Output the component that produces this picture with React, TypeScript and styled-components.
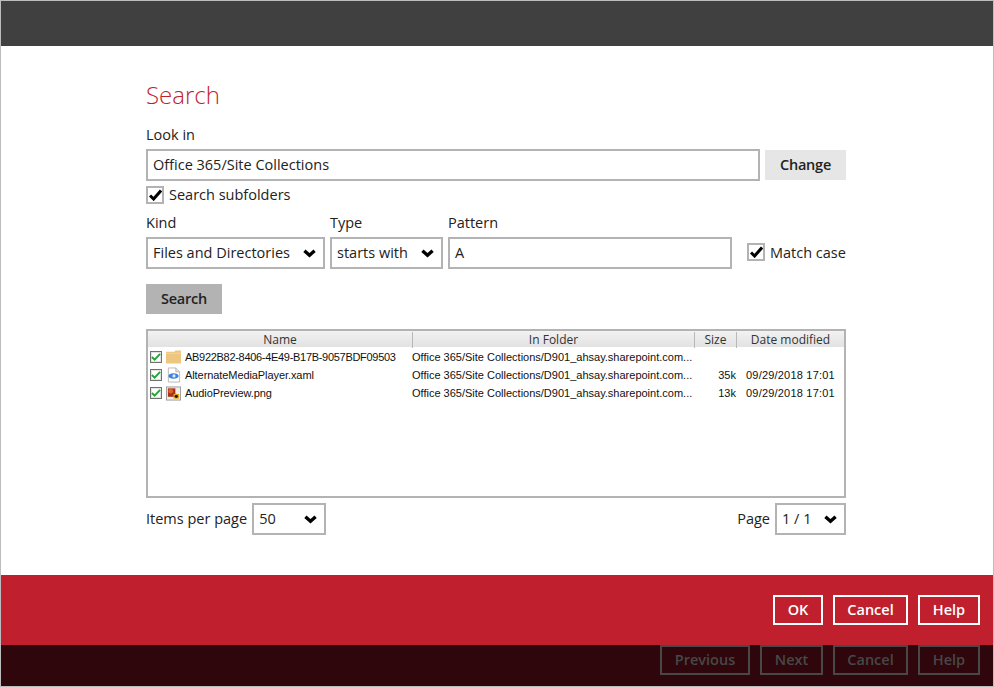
import React from 'react';
import styled, { createGlobalStyle } from 'styled-components';

const GlobalStyle = createGlobalStyle`
  html, body {
    margin: 0;
    padding: 0;
    background: #fff;
  }
  * {
    box-sizing: border-box;
  }
`;

const Frame = styled('div')`
  width: 994px;
  height: 687px;
  display: flex;
  flex-direction: column;
  border: 1px solid #bdbdbd;
  font-family: 'Open Sans', sans-serif;
  font-size: 14.5px;
  color: #222;
  background: #fff;
`;

const TopBar = styled('div')`
  height: 45px;
  flex: none;
  background: #404040;
`;

const Main = styled('div')`
  flex: 1;
  padding: 0 147px 0 145px;
  display: flex;
  flex-direction: column;
`;

const Title = styled('h1')`
  margin: 32px 0 0;
  height: 33px;
  font-size: 24px;
  line-height: 33px;
  font-weight: 300;
  color: #c01f2e;
`;

const Label = styled('div')`
  height: 20px;
  line-height: 20px;
  white-space: nowrap;
`;

const LookInLabel = styled(Label)`
  margin-top: 14px;
`;

const Row = styled('div')`
  display: flex;
  align-items: center;
`;

const LookInRow = styled(Row)`
  margin-top: 4px;
  gap: 5px;
`;

const Box = styled('div')<{ $width?: number; $grow?: boolean }>`
  height: 32px;
  width: ${({ $width }) => ($width ? `${$width}px` : 'auto')};
  flex: ${({ $grow }) => ($grow ? '1' : 'none')};
  border: 2px solid #b3b3b3;
  background: #fff;
  padding: 0 5px 1px;
  display: flex;
  align-items: center;
  justify-content: space-between;
  white-space: nowrap;

  svg {
    margin: 2px 2px 0 0;
  }
`;

const GreyButton = styled('button')<{ $width: number; $dark?: boolean }>`
  width: ${({ $width }) => $width}px;
  height: 30px;
  flex: none;
  padding: 0 0 1px;
  border: 0;
  font: 600 14.5px 'Open Sans', sans-serif;
  letter-spacing: -0.2px;
  color: #222;
  background: ${({ $dark }) => ($dark ? '#b3b3b3' : '#e6e6e6')};
`;

const CheckRow = styled(Row)`
  gap: 5px;
  white-space: nowrap;
`;

const SubfolderRow = styled(CheckRow)`
  margin-top: 4px;
`;

const CheckBox = styled('span')`
  width: 18px;
  height: 18px;
  flex: none;
  border: 2px solid #b3b3b3;
  display: flex;
  align-items: center;
  justify-content: center;
`;

const FilterRow = styled(Row)`
  margin-top: 9px;
  align-items: flex-end;
  gap: 5px;
`;

const Field = styled('div')<{ $width: number }>`
  width: ${({ $width }) => $width}px;
  display: flex;
  flex-direction: column;
  gap: 4px;
`;

const MatchCase = styled(CheckRow)`
  margin: 0 0 1px 10px;
  height: 32px;
`;

const SearchRow = styled(Row)`
  margin-top: 15px;
`;

const ResultTable = styled('div')`
  margin-top: 15px;
  height: 169px;
  border: 2px solid #b3b3b3;
  font-family: 'Liberation Sans', sans-serif;
  font-size: 11px;
  color: #111;
`;

const Columns = styled('div')`
  display: grid;
  grid-template-columns: 265px 282px 42px 107px;
`;

const HeadRow = styled(Columns)`
  height: 16px;
  background: linear-gradient(#f2f2f2, #e2e2e2);
  color: #333;
  font-family: 'Open Sans', sans-serif;
  font-size: 12px;
`;

const HeadCell = styled('div')`
  line-height: 16px;
  text-align: center;
  border-right: 1px solid #b9b9b9;
  margin: 1px 0 0;

  &:last-child {
    border-right: 0;
  }
`;

const BodyRows = styled('div')`
  padding-top: 1px;
`;

const BodyRow = styled(Columns)`
  height: 18px;
  line-height: 18px;
  white-space: nowrap;
`;

const NameCell = styled('div')`
  display: flex;
  align-items: center;
  padding-left: 2px;
  gap: 2px;
`;

const NameText = styled('span')<{ $tight?: boolean }>`
  margin-left: 2px;
  letter-spacing: ${({ $tight }) => ($tight ? '-0.3px' : '-0.08px')};
`;

const FolderCell = styled('div')`
  margin-left: -1px;
`;

const SizeCell = styled('div')`
  text-align: right;
  padding-right: 1px;
`;

const DateCell = styled('div')`
  padding-left: 9px;
  letter-spacing: 0.2px;
`;

const MiniCheck = styled('span')`
  width: 12px;
  height: 12px;
  flex: none;
  margin-right: 2px;
  background: #fff;
  border: 1px solid #707070;
  box-shadow: inset 0 0 0 1px #e4e4e4;
  display: flex;
  align-items: center;
  justify-content: center;
`;

const IconSlot = styled('span')`
  width: 15px;
  height: 16px;
  flex: none;
  display: flex;
  align-items: center;
  justify-content: center;
`;

const Pager = styled(Row)`
  margin-top: 5px;
  justify-content: space-between;
`;

const PagerSide = styled(Row)`
  gap: 5px;
`;

const PagerLabel = styled('span')`
  margin-bottom: 2px;
`;

const RedBar = styled('div')`
  height: 70px;
  flex: none;
  background: #c01f2e;
  padding: 20px 13px 0 0;
  display: flex;
  justify-content: flex-end;
  gap: 10px;
`;

const DarkBar = styled('div')`
  height: 41px;
  flex: none;
  background: #2e060b;
  display: flex;
  justify-content: flex-end;
  gap: 10px;
  padding-right: 13px;
`;

const OutlineButton = styled('button')<{ $width: number; $muted?: boolean }>`
  width: ${({ $width }) => $width}px;
  height: 30px;
  padding: 0 0 2px;
  background: transparent;
  border: 2px solid ${({ $muted }) => ($muted ? '#484848' : '#fff')};
  color: ${({ $muted }) => ($muted ? '#484848' : '#fff')};
  font: 600 14.5px 'Open Sans', sans-serif;
`;

const Chevron = () => (
  <svg width="13" height="9" viewBox="0 0 13 9">
    <path d="M1.4 1.8 L6.5 6.2 L11.6 1.8" fill="none" stroke="#000" strokeWidth="3.4" />
  </svg>
);

const Check = () => (
  <svg width="13" height="12" viewBox="0 0 13 12">
    <path d="M1 6.5 L4.6 10 L12 1.5" fill="none" stroke="#000" strokeWidth="3" />
  </svg>
);

const GreenCheck = () => (
  <svg width="10" height="10" viewBox="0 0 11 10">
    <path d="M1 5 L4 8 L10 1.5" fill="none" stroke="#1fa535" strokeWidth="2" />
  </svg>
);

const FolderIcon = () => (
  <svg width="15" height="14" viewBox="0 0 16 14">
    <path d="M0 1.5 H9 L10 0 H16 V14 H0 Z" fill="#edc67f" />
    <path d="M0 3 H16" stroke="#f3d8a4" strokeWidth="1" />
  </svg>
);

const PageIcon = () => (
  <svg width="15" height="16" viewBox="0 0 16 16">
    <path d="M2.5 0.5 H10.5 L14.5 4.5 V15.5 H2.5 Z" fill="#fff" stroke="#b5b5b5" />
    <path d="M10.5 0.5 V4.5 H14.5" fill="#e8e8e8" stroke="#b5b5b5" />
    <ellipse cx="8" cy="9" rx="5.5" ry="3" fill="#3f83d8" />
    <circle cx="8.5" cy="9" r="1.7" fill="#dcecff" />
  </svg>
);

const ImageIcon = () => (
  <svg width="15" height="15" viewBox="0 0 16 15">
    <rect x="0.5" y="0.5" width="15" height="14" fill="#f2efe9" stroke="#9b9b9b" />
    <rect x="2" y="2" width="8" height="9" fill="#a9301c" />
    <circle cx="5" cy="5" r="2.5" fill="#e0651f" />
    <rect x="8" y="8" width="6" height="5" fill="#e2a51f" />
    <circle cx="11" cy="10.5" r="1.8" fill="#2b1a10" />
  </svg>
);

const folderPath = 'Office 365/Site Collections/D901_ahsay.sharepoint.com...';

const rows = [
  { name: 'AB922B82-8406-4E49-B17B-9057BDF09503', icon: <FolderIcon />, size: '', date: '', tight: true },
  { name: 'AlternateMediaPlayer.xaml', icon: <PageIcon />, size: '35k', date: '09/29/2018 17:01' },
  { name: 'AudioPreview.png', icon: <ImageIcon />, size: '13k', date: '09/29/2018 17:01' },
];

const App = () => (
  <Frame>
    <GlobalStyle />
    <TopBar />
    <Main>
      <Title>Search</Title>
      <LookInLabel>Look in</LookInLabel>
      <LookInRow>
        <Box $grow>Office 365/Site Collections</Box>
        <GreyButton $width={81}>Change</GreyButton>
      </LookInRow>
      <SubfolderRow>
        <CheckBox>
          <Check />
        </CheckBox>
        Search subfolders
      </SubfolderRow>
      <FilterRow>
        <Field $width={179}>
          <Label>Kind</Label>
          <Box>
            Files and Directories
            <Chevron />
          </Box>
        </Field>
        <Field $width={113}>
          <Label>Type</Label>
          <Box>
            starts with
            <Chevron />
          </Box>
        </Field>
        <Field $width={284}>
          <Label>Pattern</Label>
          <Box>A</Box>
        </Field>
        <MatchCase>
          <CheckBox>
            <Check />
          </CheckBox>
          Match case
        </MatchCase>
      </FilterRow>
      <SearchRow>
        <GreyButton $width={76} $dark>
          Search
        </GreyButton>
      </SearchRow>
      <ResultTable>
        <HeadRow>
          <HeadCell>Name</HeadCell>
          <HeadCell>In Folder</HeadCell>
          <HeadCell>Size</HeadCell>
          <HeadCell>Date modified</HeadCell>
        </HeadRow>
        <BodyRows>
          {rows.map((row) => (
            <BodyRow key={row.name}>
              <NameCell>
                <MiniCheck>
                  <GreenCheck />
                </MiniCheck>
                <IconSlot>{row.icon}</IconSlot>
                <NameText $tight={row.tight}>{row.name}</NameText>
              </NameCell>
              <FolderCell>{folderPath}</FolderCell>
              <SizeCell>{row.size}</SizeCell>
              <DateCell>{row.date}</DateCell>
            </BodyRow>
          ))}
        </BodyRows>
      </ResultTable>
      <Pager>
        <PagerSide>
          <PagerLabel>Items per page</PagerLabel>
          <Box $width={74}>
            50
            <Chevron />
          </Box>
        </PagerSide>
        <PagerSide>
          <PagerLabel>Page</PagerLabel>
          <Box $width={71}>
            1 / 1
            <Chevron />
          </Box>
        </PagerSide>
      </Pager>
    </Main>
    <RedBar>
      <OutlineButton $width={50}>OK</OutlineButton>
      <OutlineButton $width={75}>Cancel</OutlineButton>
      <OutlineButton $width={62}>Help</OutlineButton>
    </RedBar>
    <DarkBar>
      <OutlineButton $width={90} $muted>
        Previous
      </OutlineButton>
      <OutlineButton $width={63} $muted>
        Next
      </OutlineButton>
      <OutlineButton $width={75} $muted>
        Cancel
      </OutlineButton>
      <OutlineButton $width={62} $muted>
        Help
      </OutlineButton>
    </DarkBar>
  </Frame>
);

export default App;
